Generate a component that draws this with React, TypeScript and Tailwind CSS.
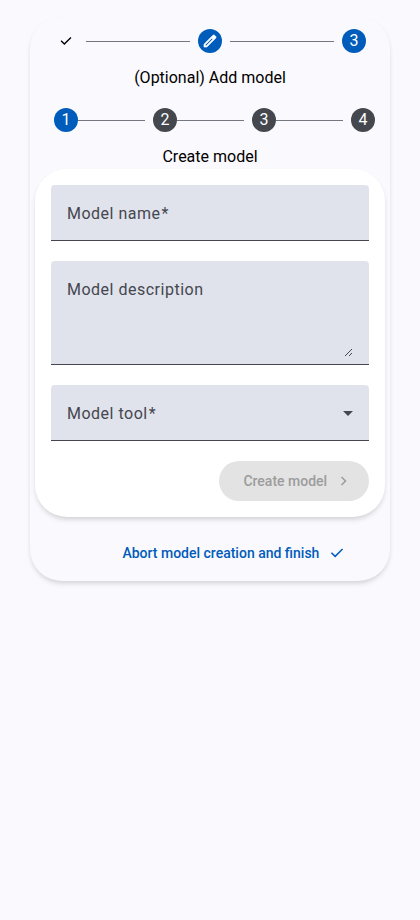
import React from "react";

const CHECK = "M382-240 154-468l57-57 171 171 367-367 57 57-424 424Z";
const CHEVRON = "M504-480 320-664l56-56 240 240-240 240-56-56 184-184Z";
const EDIT =
  "M200-200h57l391-391-57-57-391 391v57Zm-80 80v-170l528-527q12-11 26.5-17t30.5-6q16 0 31 6t26 18l55 56q12 11 17.5 26t5.5 30q0 16-5.5 30.5T817-647L290-120H120Z";

function Symbol({ path, className }: { path: string; className: string }) {
  return (
    <svg viewBox="0 -960 960 960" fill="currentColor" className={className} aria-hidden="true">
      <path d={path} />
    </svg>
  );
}

function Step({ children, className }: { children: React.ReactNode; className: string }) {
  return (
    <div className={`flex h-6 w-6 shrink-0 items-center justify-center rounded-full text-base leading-6 ${className}`}>
      {children}
    </div>
  );
}

function Line({ className }: { className: string }) {
  return <div className={`h-px flex-1 bg-[#74777f] ${className}`} />;
}

export default function App() {
  return (
    <main className="min-h-screen bg-[#faf9fd] px-[30px] pt-[17px] font-['Roboto',sans-serif] text-black">
      <section className="h-[564px] rounded-[32px] bg-[#faf9fd] px-[5px] pt-3 shadow-[0_4px_6px_-2px_rgba(0,0,0,0.12),0_2px_5px_-1px_rgba(0,0,0,0.08)]">
        <div className="flex h-6 items-center px-[19px]">
          <Step className="text-black">
            <Symbol path={CHECK} className="h-4 w-4" />
          </Step>
          <Line className="mx-2 mt-px" />
          <Step className="bg-[#005cbb] text-white">
            <Symbol path={EDIT} className="h-4 w-4 stroke-white stroke-[40]" />
          </Step>
          <Line className="mx-2 mt-px" />
          <Step className="bg-[#005cbb] text-white">3</Step>
        </div>
        <h1 className="mt-[13px] text-center text-base leading-6">(Optional) Add model</h1>

        <div className="mt-[18px] flex h-6 items-center pl-[19px] pr-[10px]">
          <Step className="bg-[#005cbb] text-white">1</Step>
          <Line className="mr-2 mt-px" />
          <Step className="bg-[#44474e] text-white">2</Step>
          <Line className="mr-2 mt-px" />
          <Step className="bg-[#44474e] text-white">3</Step>
          <Line className="mr-2 mt-px" />
          <Step className="bg-[#44474e] text-white">4</Step>
        </div>
        <h2 className="mt-[13px] text-center text-base leading-6">Create model</h2>

        <form className="flex h-[348px] flex-col rounded-[32px] bg-white p-4 text-base leading-6 tracking-[0.5px] text-[#44474e] shadow-[0_4px_6px_-2px_rgba(0,0,0,0.13),0_2px_5px_-1px_rgba(0,0,0,0.08)]">
          <div className="h-14 rounded-t border-b border-[#44474e] bg-[#e0e2ec] px-4 pt-[17px]">
            Model name<span className="ml-px">*</span>
          </div>
          <div className="mt-5 flex h-[104px] justify-between rounded-t border-b border-[#44474e] bg-[#e0e2ec] pb-[7px] pl-4 pr-[17px] pt-[17px]">
            <span>Model description</span>
            <svg viewBox="0 0 8 8" className="h-2 w-2 self-end" stroke="#44474e" shapeRendering="crispEdges" aria-hidden="true">
              <path d="M0.5 7.5 7.5 0.5M4.5 7.5 7.5 4.5" />
            </svg>
          </div>
          <div className="mt-5 flex h-14 items-start justify-between rounded-t border-b border-[#44474e] bg-[#e0e2ec] px-4 pt-[17px]">
            <span>
              Model tool<span className="ml-px">*</span>
            </span>
            <svg viewBox="0 0 10 5" className="mt-[9px] h-[5px] w-[10px]" fill="#44474e" aria-hidden="true">
              <path d="M0 0h10L5 5z" />
            </svg>
          </div>
          <button
            type="button"
            disabled
            className="mt-5 flex h-10 w-[150px] items-center self-end rounded-full bg-[#e3e3e3] pl-[24.4px] text-sm font-medium tracking-normal text-[#9c9c9c]"
          >
            Create model
            <Symbol path={CHEVRON} className="ml-2 h-[18px] w-[18px]" />
          </button>
        </form>

        <div className="mt-4 flex h-10 items-center justify-end pr-[39px] text-sm font-medium text-[#005cbb]">
          Abort model creation and finish
          <Symbol path={CHECK} className="ml-[8.6px] h-[18px] w-[18px]" />
        </div>
      </section>
    </main>
  );
}
